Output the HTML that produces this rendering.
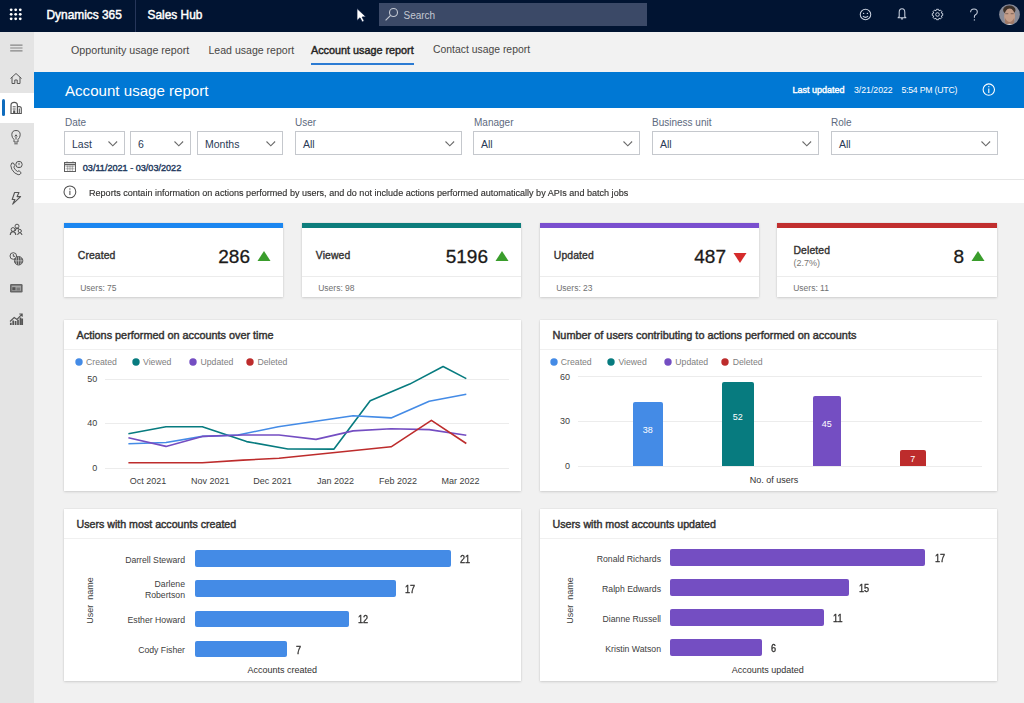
<!DOCTYPE html>
<html><head><meta charset="utf-8">
<style>
*{box-sizing:border-box;margin:0;padding:0}
html,body{width:1024px;height:703px;overflow:hidden;background:#f1f1f1;font-family:"Liberation Sans",sans-serif;color:#323130}
.t{position:absolute;white-space:nowrap;line-height:1}
.r{position:absolute}
svg{position:absolute;overflow:visible}
.card{position:absolute;background:#fff;box-shadow:0 1px 2.5px rgba(0,0,0,.13),0 0 1.5px rgba(0,0,0,.10)}
</style></head><body>
<div class="r" style="left:0px;top:0px;width:1024px;height:32px;background:#011432;"></div><svg style="left:0px;top:0px" width="32" height="32" viewBox="0 0 32 32" fill="#fff"><circle cx="11.15" cy="9.80" r="1.4"/><circle cx="11.15" cy="14.30" r="1.4"/><circle cx="11.15" cy="18.80" r="1.4"/><circle cx="15.70" cy="9.80" r="1.4"/><circle cx="15.70" cy="14.30" r="1.4"/><circle cx="15.70" cy="18.80" r="1.4"/><circle cx="20.25" cy="9.80" r="1.4"/><circle cx="20.25" cy="14.30" r="1.4"/><circle cx="20.25" cy="18.80" r="1.4"/></svg><div class="t" style="left:46.50px;top:10.23px;font-size:11.9px;color:#fff;-webkit-text-stroke:0.45px #fff;">Dynamics 365</div><div class="r" style="left:135px;top:0px;width:1px;height:32px;background:#26365a;"></div><div class="t" style="left:147.50px;top:10.23px;font-size:11.9px;color:#fff;-webkit-text-stroke:0.45px #fff;">Sales Hub</div><svg style="left:355px;top:7px" width="14" height="16" viewBox="0 0 14 16" ><path d="M2 1.5 L2 13.5 L5 10.8 L7.2 15 L9.2 14.1 L7.1 10 L10.9 9.8 Z" fill="#fff" stroke="#03163a" stroke-width="0.7"/></svg><div class="r" style="left:379px;top:3px;width:268px;height:23px;background:#3b4967;"></div><svg style="left:384px;top:7px" width="16" height="16" viewBox="0 0 16 16" fill="none" stroke="#c3c8d2" stroke-width="1.1"><circle cx="9.5" cy="5.5" r="4"/><path d="M6.6 8.4 L1.6 13.4"/></svg><div class="t" style="left:403.50px;top:11.04px;font-size:10px;color:#c3c8d2;">Search</div><svg style="left:858px;top:7px" width="15" height="15" viewBox="0 0 15 15" fill="none" stroke="#c8d0de" stroke-width="1.05"><circle cx="7.5" cy="7.5" r="5.25"/><circle cx="5.6" cy="6.4" r="0.7" fill="#c8d0de" stroke="none"/><circle cx="9.4" cy="6.4" r="0.7" fill="#c8d0de" stroke="none"/><path d="M4.9 9.2 Q7.5 11.6 10.1 9.2"/></svg><svg style="left:895px;top:6.3px" width="14" height="15" viewBox="0 0 14 15" fill="none" stroke="#c8d0de" stroke-width="1.05" stroke-linejoin="round"><path d="M4.2 10.6 L4.2 6.2 Q4.2 2.8 7 2.8 Q9.8 2.8 9.8 6.2 L9.8 10.6 Q10.3 11.4 10.9 11.8 L3.1 11.8 Q3.7 11.4 4.2 10.6 Z M6 12.6 Q7 13.4 8 12.6"/></svg><svg style="left:930px;top:7px" width="15" height="15" viewBox="0 0 15 15" fill="none" stroke="#c8d0de" stroke-width="1" stroke-linejoin="round"><polygon points="12.69,6.45 12.69,8.55 11.18,9.06 11.21,9.00 11.92,10.43 10.43,11.92 9.00,11.21 9.06,11.18 8.55,12.69 6.45,12.69 5.94,11.18 6.00,11.21 4.57,11.92 3.08,10.43 3.79,9.00 3.82,9.06 2.31,8.55 2.31,6.45 3.82,5.94 3.79,6.00 3.08,4.57 4.57,3.08 6.00,3.79 5.94,3.82 6.45,2.31 8.55,2.31 9.06,3.82 9.00,3.79 10.43,3.08 11.92,4.57 11.21,6.00 11.18,5.94"/><circle cx="7.5" cy="7.5" r="1.8"/></svg><svg style="left:967px;top:6px" width="14" height="16" viewBox="0 0 14 16" fill="none" stroke="#c8d0de" stroke-width="1.05"><path d="M3.6 6.2 Q3.6 3 7 3 Q10.3 3 10.3 6 Q10.3 8 8.2 9 Q7.4 9.5 7.4 10.6 V11.8"/><circle cx="7.4" cy="13.9" r="0.7" fill="#c8d0de" stroke="none"/></svg><svg style="left:999px;top:4px" width="21" height="21" viewBox="0 0 21 21" ><defs><clipPath id="avc"><circle cx="10.5" cy="10.6" r="10.3"/></clipPath><filter id="avb"><feGaussianBlur stdDeviation="0.6"/></filter></defs><circle cx="10.5" cy="10.6" r="10.4" fill="#888b98"/><g clip-path="url(#avc)" filter="url(#avb)"><ellipse cx="10.3" cy="6" rx="6.2" ry="4.5" fill="#3e3029"/><ellipse cx="10.6" cy="12.6" rx="5.4" ry="8" fill="#c49d88"/><path d="M6.3 9.6 H9.3 M11.7 9.6 H14.7" stroke="#8c6e60" stroke-width="1.2"/><path d="M6 14 Q10.6 22 15.2 14 L15.2 19 Q10.6 23 6 19 Z" fill="#a07a68"/><path d="M3 22 Q10.5 17.5 18 22 Z" fill="#d8d8dc"/></g></svg><div class="r" style="left:0px;top:32px;width:34px;height:671px;background:#e4e4e4;"></div><div class="r" style="left:0px;top:93px;width:34px;height:30px;background:#fff;"></div><div class="r" style="left:1.5px;top:99px;width:3px;height:17px;background:#0f6cbd;border-radius:2px"></div><svg style="left:0px;top:32px" width="34" height="300" viewBox="0 0 34 300" fill="none" stroke="#555" stroke-width="1">
<path d="M10.2 13.1 H22.5 M10.2 16 H22.5 M10.2 18.9 H22.5" stroke="#858585" stroke-width="1.15"/>
<path d="M10.5 46.5 L16 41.5 L21.5 46.5 M12 45.2 V51.5 H14.8 V48 H17.2 V51.5 H20 V45.2"/>
<path d="M11 81.5 V73.2 Q11 70.3 14.2 70.3 Q17.4 70.3 17.4 73.2 V81.5 Z" stroke-width="1.2"/><path d="M17.4 74.6 H19.3 Q21.3 74.6 21.3 76.6 V81.5 H17.4 M19.3 76.6 V81.5" stroke-width="1.1"/><path d="M12.7 74.8 H15.7 M12.7 77 H15.7" stroke-width="1"/><rect x="13.1" y="78.4" width="2.2" height="3" fill="#555" stroke="none"/>
<path d="M16 98.5 Q11.8 98.5 11.8 102.8 Q11.8 105.5 14 107.5 V110 H18 V107.5 Q20.2 105.5 20.2 102.8 Q20.2 98.5 16 98.5 Z M14.3 111.8 H17.7 M14.8 104.5 L16 102.8 L17.2 104.5 M16 104.5 V107.5"/>
<g transform="translate(0,2.5)"><path d="M11.8 128.5 Q9.8 130.5 11.8 134.8 Q14.2 139.2 18.2 140.2 Q20.2 140.5 21.2 138.5 L19.2 136.2 L17.5 137 Q14.8 135.6 13.8 132.6 L14.8 131 L13.4 128.5 Z"/><circle cx="19" cy="130" r="3.2"/><path d="M19 128.3 V130.4 M19 131.4 V131.8"/></g>
<path d="M14.6 160.5 H19 L17.1 164.6 H20.6 L12.7 172.2 L14.9 167.5 H12.2 Z" stroke-width="1.1" stroke-linejoin="round"/>
<circle cx="17" cy="194.2" r="2"/><circle cx="13" cy="197.5" r="1.9"/><circle cx="19.8" cy="199" r="1.6"/><path d="M10.2 203 Q10.6 199.6 13 199.6 Q15.4 199.6 15.8 203 M15.2 199 Q15.6 196.4 17 196.4 Q18.6 196.4 19 197.4 M17.6 203 Q18 200.8 19.8 200.8 Q21.6 200.8 22 203" stroke-width="1.1"/>
<g transform="translate(0.3,2.5)"><circle cx="13" cy="221.5" r="3.3"/><path d="M13 219.5 V221.8 H14.8"/><circle cx="18.3" cy="226.3" r="4.2" fill="#555"/><path d="M14.3 226.3 H22.3 M18.3 222.3 V230.3 M16.3 222.8 Q15.2 226.3 16.3 229.8 M20.3 222.8 Q21.4 226.3 20.3 229.8" stroke="#e6e6e6" stroke-width="0.6"/></g>
<rect x="10" y="252" width="12.6" height="8.4" rx="1.2" fill="#666" stroke="none"/><rect x="11.6" y="253.6" width="9.4" height="5.2" fill="#a8a8a8" stroke="none"/><rect x="12.3" y="255.2" width="3.2" height="3" fill="#555" stroke="none"/><path d="M16.5 256.2 H20.2 M16.5 257.8 H20.2" stroke="#555" stroke-width="0.8"/>
<path d="M10 289.5 L14.2 285.5 L17 287.5 L22 282.2 M19.3 282 H22.2 V284.8" stroke-width="1.1"/><path d="M10.8 293 V290.8 M13.2 293 V288.5 M15.6 293 V289 M18 293 V287.8 M20.4 293 V285.5 M22.2 293 V286.5" stroke-width="1.7"/>
</svg><div class="r" style="left:34px;top:32px;width:990px;height:40px;background:#f2f2f2;"></div><div class="t" style="left:71.00px;top:44.64px;font-size:10.7px;color:#484644;">Opportunity usage report</div><div class="t" style="left:208.50px;top:44.77px;font-size:10.55px;color:#484644;">Lead usage report</div><div class="t" style="left:311.00px;top:44.56px;font-size:10.8px;color:#252423;-webkit-text-stroke:0.42px #252423;">Account usage report</div><div class="r" style="left:311px;top:63px;width:103px;height:2px;background:#2b7bd3;"></div><div class="t" style="left:433.00px;top:44.90px;font-size:10.4px;color:#484644;">Contact usage report</div><div class="r" style="left:34px;top:72px;width:990px;height:36px;background:#0078d4;"></div><div class="t" style="left:65.00px;top:83.12px;font-size:15.1px;color:#fff;">Account usage report</div><div class="t" style="left:792.50px;top:86.08px;font-size:9px;color:#fff;-webkit-text-stroke:0.4px #fff;">Last updated</div><div class="t" style="left:854.00px;top:86.34px;font-size:8.7px;color:#fff;">3/21/2022</div><div class="t" style="left:901.40px;top:86.34px;font-size:8.7px;color:#fff;letter-spacing:-0.2px">5:54 PM (UTC)</div><svg style="left:982px;top:83px" width="14" height="14" viewBox="0 0 14 14" fill="none" stroke="#fff" stroke-width="1.1"><circle cx="6.8" cy="6.6" r="5.7"/><path d="M6.8 5.6 V10"/><circle cx="6.8" cy="3.7" r="0.65" fill="#fff" stroke="none"/></svg><div class="r" style="left:34px;top:108px;width:990px;height:72px;background:#fff;"></div><div class="t" style="left:65.00px;top:117.94px;font-size:10px;color:#5d6a7e;">Date</div><div class="t" style="left:295.00px;top:117.94px;font-size:10px;color:#5d6a7e;">User</div><div class="t" style="left:474.00px;top:117.94px;font-size:10px;color:#5d6a7e;">Manager</div><div class="t" style="left:652.00px;top:117.94px;font-size:10px;color:#5d6a7e;">Business unit</div><div class="t" style="left:831.00px;top:117.94px;font-size:10px;color:#5d6a7e;">Role</div><div class="r" style="left:64px;top:131px;width:61px;height:24px;border:1px solid #c5c8cd;background:#fff"></div><div class="t" style="left:72.00px;top:138.61px;font-size:10.5px;color:#2a3a56;">Last</div><svg style="left:107.7px;top:141.2px" width="10" height="6" viewBox="0 0 10 6" fill="none" stroke="#6b6b6b" stroke-width="1.1"><path d="M0.5 0.5 L4.8 4.8 L9.1 0.5"/></svg><div class="r" style="left:130px;top:131px;width:61px;height:24px;border:1px solid #c5c8cd;background:#fff"></div><div class="t" style="left:138.00px;top:138.61px;font-size:10.5px;color:#2a3a56;">6</div><svg style="left:173.7px;top:141.2px" width="10" height="6" viewBox="0 0 10 6" fill="none" stroke="#6b6b6b" stroke-width="1.1"><path d="M0.5 0.5 L4.8 4.8 L9.1 0.5"/></svg><div class="r" style="left:197px;top:131px;width:86px;height:24px;border:1px solid #c5c8cd;background:#fff"></div><div class="t" style="left:205.00px;top:138.61px;font-size:10.5px;color:#2a3a56;">Months</div><svg style="left:265.7px;top:141.2px" width="10" height="6" viewBox="0 0 10 6" fill="none" stroke="#6b6b6b" stroke-width="1.1"><path d="M0.5 0.5 L4.8 4.8 L9.1 0.5"/></svg><div class="r" style="left:295px;top:131px;width:167px;height:24px;border:1px solid #c5c8cd;background:#fff"></div><div class="t" style="left:303.00px;top:138.61px;font-size:10.5px;color:#2a3a56;">All</div><svg style="left:444.7px;top:141.2px" width="10" height="6" viewBox="0 0 10 6" fill="none" stroke="#6b6b6b" stroke-width="1.1"><path d="M0.5 0.5 L4.8 4.8 L9.1 0.5"/></svg><div class="r" style="left:473px;top:131px;width:167px;height:24px;border:1px solid #c5c8cd;background:#fff"></div><div class="t" style="left:481.00px;top:138.61px;font-size:10.5px;color:#2a3a56;">All</div><svg style="left:622.7px;top:141.2px" width="10" height="6" viewBox="0 0 10 6" fill="none" stroke="#6b6b6b" stroke-width="1.1"><path d="M0.5 0.5 L4.8 4.8 L9.1 0.5"/></svg><div class="r" style="left:652px;top:131px;width:167px;height:24px;border:1px solid #c5c8cd;background:#fff"></div><div class="t" style="left:660.00px;top:138.61px;font-size:10.5px;color:#2a3a56;">All</div><svg style="left:801.7px;top:141.2px" width="10" height="6" viewBox="0 0 10 6" fill="none" stroke="#6b6b6b" stroke-width="1.1"><path d="M0.5 0.5 L4.8 4.8 L9.1 0.5"/></svg><div class="r" style="left:831px;top:131px;width:167px;height:24px;border:1px solid #c5c8cd;background:#fff"></div><div class="t" style="left:839.00px;top:138.61px;font-size:10.5px;color:#2a3a56;">All</div><svg style="left:980.7px;top:141.2px" width="10" height="6" viewBox="0 0 10 6" fill="none" stroke="#6b6b6b" stroke-width="1.1"><path d="M0.5 0.5 L4.8 4.8 L9.1 0.5"/></svg><svg style="left:64px;top:161px" width="12" height="11" viewBox="0 0 12 11" fill="none" stroke="#606060" stroke-width="1"><rect x="0.5" y="1.5" width="11" height="9"/><path d="M0.5 3.5 H11.5" stroke-width="1.6"/><path d="M3 0 V2 M9 0 V2 M1.5 5.7 H10.5 M1.5 7.8 H10.5 M3.7 4.5 V10 M6 4.5 V10 M8.3 4.5 V10" stroke-width="0.5"/></svg><div class="t" style="left:82.80px;top:163.70px;font-size:9.1px;color:#243a5e;-webkit-text-stroke:0.4px #243a5e;">03/11/2021 - 03/03/2022</div><div class="r" style="left:34px;top:179px;width:990px;height:1px;background:#e6e6e6;"></div><div class="r" style="left:34px;top:180px;width:990px;height:23px;background:#fff;"></div><svg style="left:63px;top:185px" width="14" height="14" viewBox="0 0 14 14" fill="none" stroke="#505050" stroke-width="1.05"><circle cx="6.9" cy="6.9" r="5.9"/><path d="M6.9 5.8 V10"/><circle cx="6.9" cy="4" r="0.65" fill="#505050" stroke="none"/></svg><div class="t" style="left:88.80px;top:188.09px;font-size:9.7px;color:#323130;-webkit-text-stroke:0.15px #323130;transform:scaleX(0.935);transform-origin:0 0">Reports contain information on actions performed by users, and do not include actions performed automatically by APIs and batch jobs</div><div class="card" style="left:64px;top:223px;width:219px;height:74px"></div><div class="r" style="left:64px;top:223px;width:219px;height:5px;background:#1b86f0;"></div><div class="r" style="left:64px;top:276px;width:219px;height:1px;background:#ececec;"></div><div class="t" style="left:77.80px;top:250.80px;font-size:10.4px;color:#323130;-webkit-text-stroke:0.36px #323130;letter-spacing:0.1px">Created</div><div class="t" style="right:774.00px;text-align:right;top:246.72px;font-size:19px;color:#1b1a19;-webkit-text-stroke:0.3px #1b1a19;">286</div><svg style="left:256.5px;top:251px" width="14" height="10" viewBox="0 0 14 10" fill="#3a9d2c"><path d="M7 0 L13.5 10 L0.5 10 Z"/></svg><div class="t" style="left:80.20px;top:283.61px;font-size:8.5px;color:#707070;">Users: 75</div><div class="card" style="left:302px;top:223px;width:219px;height:74px"></div><div class="r" style="left:302px;top:223px;width:219px;height:5px;background:#0d7d7c;"></div><div class="r" style="left:302px;top:276px;width:219px;height:1px;background:#ececec;"></div><div class="t" style="left:315.80px;top:250.80px;font-size:10.4px;color:#323130;-webkit-text-stroke:0.36px #323130;letter-spacing:0.1px">Viewed</div><div class="t" style="right:536.00px;text-align:right;top:246.72px;font-size:19px;color:#1b1a19;-webkit-text-stroke:0.3px #1b1a19;">5196</div><svg style="left:494.5px;top:251px" width="14" height="10" viewBox="0 0 14 10" fill="#3a9d2c"><path d="M7 0 L13.5 10 L0.5 10 Z"/></svg><div class="t" style="left:318.20px;top:283.61px;font-size:8.5px;color:#707070;">Users: 98</div><div class="card" style="left:540px;top:223px;width:219px;height:74px"></div><div class="r" style="left:540px;top:223px;width:219px;height:5px;background:#7a4fcf;"></div><div class="r" style="left:540px;top:276px;width:219px;height:1px;background:#ececec;"></div><div class="t" style="left:553.80px;top:250.80px;font-size:10.4px;color:#323130;-webkit-text-stroke:0.36px #323130;letter-spacing:0.1px">Updated</div><div class="t" style="right:298.00px;text-align:right;top:246.72px;font-size:19px;color:#1b1a19;-webkit-text-stroke:0.3px #1b1a19;">487</div><svg style="left:732.5px;top:252.8px" width="14" height="10" viewBox="0 0 14 10" fill="#d52b2b"><path d="M0.5 0 L13.5 0 L7 10 Z"/></svg><div class="t" style="left:556.20px;top:283.61px;font-size:8.5px;color:#707070;">Users: 23</div><div class="card" style="left:777px;top:223px;width:220px;height:74px"></div><div class="r" style="left:777px;top:223px;width:220px;height:5px;background:#c12f2f;"></div><div class="r" style="left:777px;top:276px;width:220px;height:1px;background:#ececec;"></div><div class="t" style="left:793.50px;top:246.20px;font-size:10.4px;color:#323130;-webkit-text-stroke:0.36px #323130;letter-spacing:0.1px">Deleted</div><div class="t" style="left:793.50px;top:258.68px;font-size:9px;color:#797775;">(2.7%)</div><div class="t" style="right:60.00px;text-align:right;top:246.72px;font-size:19px;color:#1b1a19;-webkit-text-stroke:0.3px #1b1a19;">8</div><svg style="left:970.5px;top:251px" width="14" height="10" viewBox="0 0 14 10" fill="#3a9d2c"><path d="M7 0 L13.5 10 L0.5 10 Z"/></svg><div class="t" style="left:793.20px;top:283.61px;font-size:8.5px;color:#707070;">Users: 11</div><div class="card" style="left:64px;top:320px;width:457px;height:171px"></div><div class="t" style="left:76.50px;top:330.02px;font-size:10.85px;color:#323130;-webkit-text-stroke:0.42px #323130;">Actions performed on accounts over time</div><div class="r" style="left:64px;top:349px;width:457px;height:1px;background:#f0f0f0;"></div><svg style="left:74.7px;top:357.7px" width="8" height="8" viewBox="0 0 8 8" ><circle cx="4" cy="4" r="3.7" fill="#448be6"/></svg><div class="t" style="left:86.00px;top:357.94px;font-size:8.7px;color:#808080;">Created</div><svg style="left:131.6px;top:357.7px" width="8" height="8" viewBox="0 0 8 8" ><circle cx="4" cy="4" r="3.7" fill="#077b7f"/></svg><div class="t" style="left:143.00px;top:357.94px;font-size:8.7px;color:#808080;">Viewed</div><svg style="left:189.3px;top:357.7px" width="8" height="8" viewBox="0 0 8 8" ><circle cx="4" cy="4" r="3.7" fill="#744ec2"/></svg><div class="t" style="left:200.50px;top:357.94px;font-size:8.7px;color:#808080;">Updated</div><svg style="left:246px;top:357.7px" width="8" height="8" viewBox="0 0 8 8" ><circle cx="4" cy="4" r="3.7" fill="#bd2c2c"/></svg><div class="t" style="left:257.50px;top:357.94px;font-size:8.7px;color:#808080;">Deleted</div><div class="r" style="left:105px;top:379px;width:404px;height:1px;background:#ececec;"></div><div class="r" style="left:105px;top:423px;width:404px;height:1px;background:#ececec;"></div><div class="r" style="left:105px;top:468px;width:404px;height:1px;background:#ececec;"></div><div class="t" style="right:926.70px;text-align:right;top:375.08px;font-size:9px;color:#404040;">50</div><div class="t" style="right:926.70px;text-align:right;top:419.18px;font-size:9px;color:#404040;">40</div><div class="t" style="right:926.70px;text-align:right;top:464.38px;font-size:9px;color:#404040;">0</div><div class="t" style="left:-52.00px;width:400px;text-align:center;top:476.58px;font-size:9px;color:#404040;">Oct 2021</div><div class="t" style="left:10.20px;width:400px;text-align:center;top:476.58px;font-size:9px;color:#404040;">Nov 2021</div><div class="t" style="left:72.50px;width:400px;text-align:center;top:476.58px;font-size:9px;color:#404040;">Dec 2021</div><div class="t" style="left:135.50px;width:400px;text-align:center;top:476.58px;font-size:9px;color:#404040;">Jan 2022</div><div class="t" style="left:198.00px;width:400px;text-align:center;top:476.58px;font-size:9px;color:#404040;">Feb 2022</div><div class="t" style="left:260.50px;width:400px;text-align:center;top:476.58px;font-size:9px;color:#404040;">Mar 2022</div><svg style="left:0px;top:0px" width="1024" height="703" viewBox="0 0 1024 703" fill="none" stroke-width="1.6" stroke-linejoin="round"><polyline points="128.4,433.7 166,426.7 202.3,426.7 246.6,441.6 287.9,449 334,449.1 370.2,400.8 409.7,384.1 443.1,366.5 466.3,378.6" stroke="#077b7f"/><polyline points="128.4,443.7 166,442.5 202.3,436.4 238,435 278.2,426.7 353.1,415.7 391.1,417.9 429.2,401.2 466.3,394.3" stroke="#448be6"/><polyline points="128.4,437.8 166,446.4 202.3,436.4 243,435 279,435 316,439.4 353.1,430.9 391.1,428.7 429.2,429.6 466.3,435.2" stroke="#744ec2"/><polyline points="128.4,462.7 202.3,462.7 243,460.1 279,458.3 391.1,446.8 431.4,420.3 466.3,443.5" stroke="#bd2c2c"/></svg><div class="card" style="left:540px;top:320px;width:457px;height:171px"></div><div class="t" style="left:552.50px;top:329.97px;font-size:10.9px;color:#323130;-webkit-text-stroke:0.42px #323130;">Number of users contributing to actions performed on accounts</div><div class="r" style="left:540px;top:349px;width:457px;height:1px;background:#f0f0f0;"></div><svg style="left:549.5px;top:357.8px" width="8" height="8" viewBox="0 0 8 8" ><circle cx="4" cy="4" r="3.7" fill="#448be6"/></svg><div class="t" style="left:560.80px;top:358.04px;font-size:8.7px;color:#808080;">Created</div><svg style="left:606.9px;top:357.8px" width="8" height="8" viewBox="0 0 8 8" ><circle cx="4" cy="4" r="3.7" fill="#077b7f"/></svg><div class="t" style="left:618.40px;top:358.04px;font-size:8.7px;color:#808080;">Viewed</div><svg style="left:664.2px;top:357.8px" width="8" height="8" viewBox="0 0 8 8" ><circle cx="4" cy="4" r="3.7" fill="#744ec2"/></svg><div class="t" style="left:675.30px;top:358.04px;font-size:8.7px;color:#808080;">Updated</div><svg style="left:721.2px;top:357.8px" width="8" height="8" viewBox="0 0 8 8" ><circle cx="4" cy="4" r="3.7" fill="#bd2c2c"/></svg><div class="t" style="left:732.70px;top:358.04px;font-size:8.7px;color:#808080;">Deleted</div><div class="r" style="left:578px;top:376px;width:404px;height:1px;background:#ececec;"></div><div class="r" style="left:578px;top:421px;width:404px;height:1px;background:#ececec;"></div><div class="r" style="left:578px;top:466px;width:404px;height:1px;background:#ececec;"></div><div class="t" style="right:454.00px;text-align:right;top:372.88px;font-size:9px;color:#404040;">60</div><div class="t" style="right:454.00px;text-align:right;top:417.18px;font-size:9px;color:#404040;">30</div><div class="t" style="right:454.00px;text-align:right;top:461.88px;font-size:9px;color:#404040;">0</div><div class="r" style="left:633px;top:402px;width:29.5px;height:64px;background:#448be6;border-radius:2px 2px 0 0"></div><div class="t" style="left:447.75px;width:400px;text-align:center;top:425.58px;font-size:9px;color:#fff;">38</div><div class="r" style="left:722px;top:382px;width:31.5px;height:84px;background:#077b7f;border-radius:2px 2px 0 0"></div><div class="t" style="left:537.75px;width:400px;text-align:center;top:413.28px;font-size:9px;color:#fff;">52</div><div class="r" style="left:813px;top:396px;width:27.5px;height:70px;background:#744ec2;border-radius:2px 2px 0 0"></div><div class="t" style="left:626.75px;width:400px;text-align:center;top:419.88px;font-size:9px;color:#fff;">45</div><div class="r" style="left:900px;top:450px;width:25.5px;height:16px;background:#bd2c2c;border-radius:2px 2px 0 0"></div><div class="t" style="left:712.75px;width:400px;text-align:center;top:454.78px;font-size:9px;color:#fff;">7</div><div class="t" style="left:574.00px;width:400px;text-align:center;top:475.88px;font-size:9px;color:#323130;">No. of users</div><div class="card" style="left:64px;top:509px;width:457px;height:172px"></div><div class="t" style="left:76.50px;top:519.19px;font-size:10.65px;color:#323130;-webkit-text-stroke:0.42px #323130;">Users with most accounts created</div><div class="r" style="left:64px;top:538px;width:457px;height:1px;background:#f0f0f0;"></div><div class="r" style="left:195px;top:550.20px;width:255.50px;height:16.5px;background:#448be6;border-radius:2px"></div><div class="t" style="right:839.00px;text-align:right;top:555.84px;font-size:8.7px;color:#404040;">Darrell Steward</div><div class="t" style="left:459.80px;top:553.99px;font-size:11px;color:#323130;-webkit-text-stroke:0.35px #323130;transform:scaleX(0.83);transform-origin:0 0">21</div><div class="r" style="left:195px;top:580.40px;width:200.60px;height:16.5px;background:#448be6;border-radius:2px"></div><div class="t" style="right:839.00px;text-align:right;top:580.04px;font-size:8.7px;color:#404040;">Darlene</div><div class="t" style="right:839.00px;text-align:right;top:590.54px;font-size:8.7px;color:#404040;">Robertson</div><div class="t" style="left:404.90px;top:584.19px;font-size:11px;color:#323130;-webkit-text-stroke:0.35px #323130;transform:scaleX(0.83);transform-origin:0 0">17</div><div class="r" style="left:195px;top:610.60px;width:153.90px;height:16.5px;background:#448be6;border-radius:2px"></div><div class="t" style="right:839.00px;text-align:right;top:616.24px;font-size:8.7px;color:#404040;">Esther Howard</div><div class="t" style="left:358.20px;top:614.39px;font-size:11px;color:#323130;-webkit-text-stroke:0.35px #323130;transform:scaleX(0.83);transform-origin:0 0">12</div><div class="r" style="left:195px;top:640.80px;width:91.80px;height:16.5px;background:#448be6;border-radius:2px"></div><div class="t" style="right:839.00px;text-align:right;top:646.44px;font-size:8.7px;color:#404040;">Cody Fisher</div><div class="t" style="left:296.10px;top:644.59px;font-size:11px;color:#323130;-webkit-text-stroke:0.35px #323130;transform:scaleX(0.83);transform-origin:0 0">7</div><div class="t" style="left:60.400000000000006px;top:596px;width:60px;text-align:center;font-size:9px;color:#404040;transform:rotate(-90deg)">User&nbsp; name</div><div class="t" style="left:82.20px;width:400px;text-align:center;top:665.68px;font-size:9px;color:#323130;">Accounts created</div><div class="card" style="left:540px;top:509px;width:457px;height:172px"></div><div class="t" style="left:552.50px;top:519.14px;font-size:10.7px;color:#323130;-webkit-text-stroke:0.42px #323130;">Users with most accounts updated</div><div class="r" style="left:540px;top:538px;width:457px;height:1px;background:#f0f0f0;"></div><div class="r" style="left:670.3px;top:549.00px;width:255.00px;height:16.5px;background:#744ec2;border-radius:2px"></div><div class="t" style="right:363.00px;text-align:right;top:554.64px;font-size:8.7px;color:#404040;">Ronald Richards</div><div class="t" style="left:934.60px;top:552.79px;font-size:11px;color:#323130;-webkit-text-stroke:0.35px #323130;transform:scaleX(0.83);transform-origin:0 0">17</div><div class="r" style="left:670.3px;top:579.05px;width:179.10px;height:16.5px;background:#744ec2;border-radius:2px"></div><div class="t" style="right:363.00px;text-align:right;top:584.69px;font-size:8.7px;color:#404040;">Ralph Edwards</div><div class="t" style="left:858.70px;top:582.84px;font-size:11px;color:#323130;-webkit-text-stroke:0.35px #323130;transform:scaleX(0.83);transform-origin:0 0">15</div><div class="r" style="left:670.3px;top:609.10px;width:153.70px;height:16.5px;background:#744ec2;border-radius:2px"></div><div class="t" style="right:363.00px;text-align:right;top:614.74px;font-size:8.7px;color:#404040;">Dianne Russell</div><div class="t" style="left:833.30px;top:612.89px;font-size:11px;color:#323130;-webkit-text-stroke:0.35px #323130;transform:scaleX(0.83);transform-origin:0 0">11</div><div class="r" style="left:670.3px;top:639.15px;width:91.50px;height:16.5px;background:#744ec2;border-radius:2px"></div><div class="t" style="right:363.00px;text-align:right;top:644.79px;font-size:8.7px;color:#404040;">Kristin Watson</div><div class="t" style="left:771.10px;top:642.94px;font-size:11px;color:#323130;-webkit-text-stroke:0.35px #323130;transform:scaleX(0.83);transform-origin:0 0">6</div><div class="t" style="left:539.5px;top:596px;width:60px;text-align:center;font-size:9px;color:#404040;transform:rotate(-90deg)">User&nbsp; name</div><div class="t" style="left:567.70px;width:400px;text-align:center;top:665.68px;font-size:9px;color:#323130;">Accounts updated</div>
</body></html>
